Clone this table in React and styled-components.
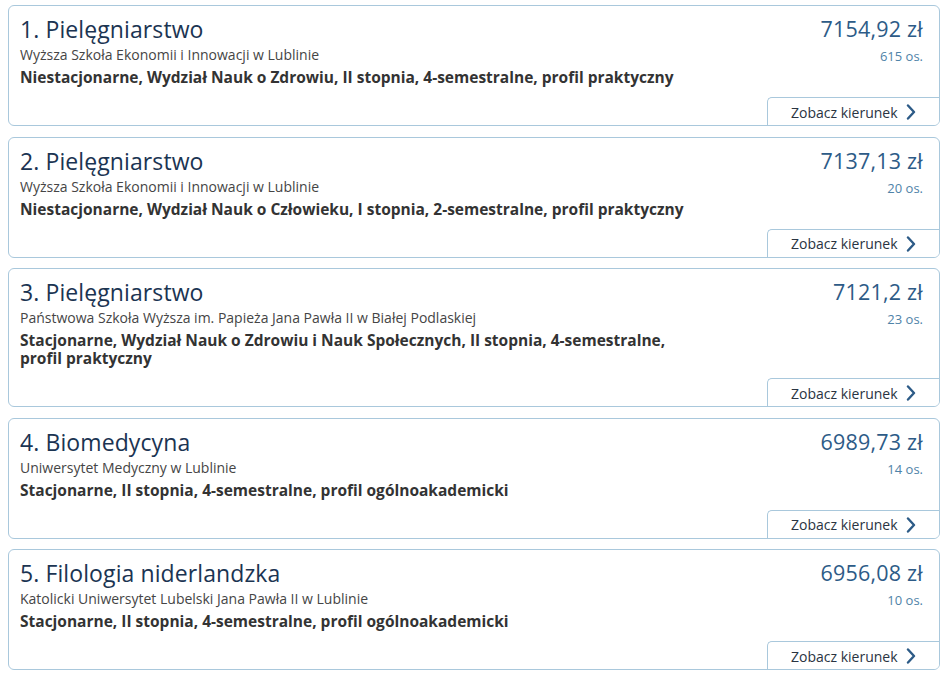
import React from 'react'
import styled, { createGlobalStyle } from 'styled-components'

const Global = createGlobalStyle`
  body {
    margin: 0;
    background: #fff;
    font-family: "Open Sans", "Liberation Sans", sans-serif;
  }
`

const List = styled.div`
  display: flex;
  flex-direction: column;
  gap: 10.5px;
  padding: 5px 8px 0 8px;
  width: 932px;
`

const Card = styled.div`
  display: flex;
  flex-direction: column;
  border: 1px solid #a9c8dc;
  border-radius: 6px;
  background: #fff;
  overflow: hidden;
`

const Top = styled.div`
  display: flex;
  justify-content: space-between;
  padding: 8px 16px 0 11px;
`

const Info = styled.div`
  display: flex;
  flex-direction: column;
  max-width: 682px;
`

const Title = styled.div`
  font-size: 23px;
  line-height: 30px;
  color: #1b3452;
  letter-spacing: 0.1px;
`

const School = styled.div`
  font-size: 14px;
  line-height: 20px;
  color: #454545;
  margin-top: 1px;
`

const Details = styled.div`
  font-size: 15.5px;
  line-height: 18px;
  font-weight: 700;
  color: #333;
  margin-top: 3px;
`

const Price = styled.div`
  display: flex;
  flex-direction: column;
  align-items: flex-end;
  flex-shrink: 0;
`

const Amount = styled.div`
  font-size: 21.5px;
  line-height: 30px;
  color: #2d5b87;
  letter-spacing: 0.2px;
`

const Count = styled.div`
  font-size: 13px;
  line-height: 18px;
  color: #4f83a8;
  margin-top: 3px;
`

const Footer = styled.div`
  display: flex;
  justify-content: flex-end;
  margin-top: 11px;
`

const Button = styled.button`
  display: flex;
  align-items: center;
  gap: 8px;
  height: 29px;
  width: 173px;
  margin-bottom: -1px;
  margin-right: -1px;
  padding: 0 20px 0 23px;
  border: 1px solid #a9c8dc;
  border-right: none;
  border-bottom: none;
  border-top-left-radius: 5px;
  background: #fff;
  font-family: "Open Sans", "Liberation Sans", sans-serif;
  font-size: 14px;
  color: #2a3442;
  cursor: pointer;
`

const Chevron = () => (
  <svg width="10" height="16" viewBox="0 0 10 16">
    <path d="M2 1.5 L8 8 L2 14.5" fill="none" stroke="#2d5b87" strokeWidth="2.4" strokeLinecap="round" strokeLinejoin="round" />
  </svg>
)

const items = [
  { n: 1, name: 'Pielęgniarstwo', school: 'Wyższa Szkoła Ekonomii i Innowacji w Lublinie', details: 'Niestacjonarne, Wydział Nauk o Zdrowiu, II stopnia, 4-semestralne, profil praktyczny', price: '7154,92 zł', count: '615 os.' },
  { n: 2, name: 'Pielęgniarstwo', school: 'Wyższa Szkoła Ekonomii i Innowacji w Lublinie', details: 'Niestacjonarne, Wydział Nauk o Człowieku, I stopnia, 2-semestralne, profil praktyczny', price: '7137,13 zł', count: '20 os.' },
  { n: 3, name: 'Pielęgniarstwo', school: 'Państwowa Szkoła Wyższa im. Papieża Jana Pawła II w Białej Podlaskiej', details: 'Stacjonarne, Wydział Nauk o Zdrowiu i Nauk Społecznych, II stopnia, 4-semestralne, profil praktyczny', price: '7121,2 zł', count: '23 os.' },
  { n: 4, name: 'Biomedycyna', school: 'Uniwersytet Medyczny w Lublinie', details: 'Stacjonarne, II stopnia, 4-semestralne, profil ogólnoakademicki', price: '6989,73 zł', count: '14 os.' },
  { n: 5, name: 'Filologia niderlandzka', school: 'Katolicki Uniwersytet Lubelski Jana Pawła II w Lublinie', details: 'Stacjonarne, II stopnia, 4-semestralne, profil ogólnoakademicki', price: '6956,08 zł', count: '10 os.' },
]

export default function App() {
  return (
    <>
      <Global />
      <List>
        {items.map(it => (
          <Card key={it.n}>
            <Top>
              <Info>
                <Title>{it.n}. {it.name}</Title>
                <School>{it.school}</School>
                <Details>{it.details}</Details>
              </Info>
              <Price>
                <Amount>{it.price}</Amount>
                <Count>{it.count}</Count>
              </Price>
            </Top>
            <Footer>
              <Button>Zobacz kierunek <Chevron /></Button>
            </Footer>
          </Card>
        ))}
      </List>
    </>
  )
}
